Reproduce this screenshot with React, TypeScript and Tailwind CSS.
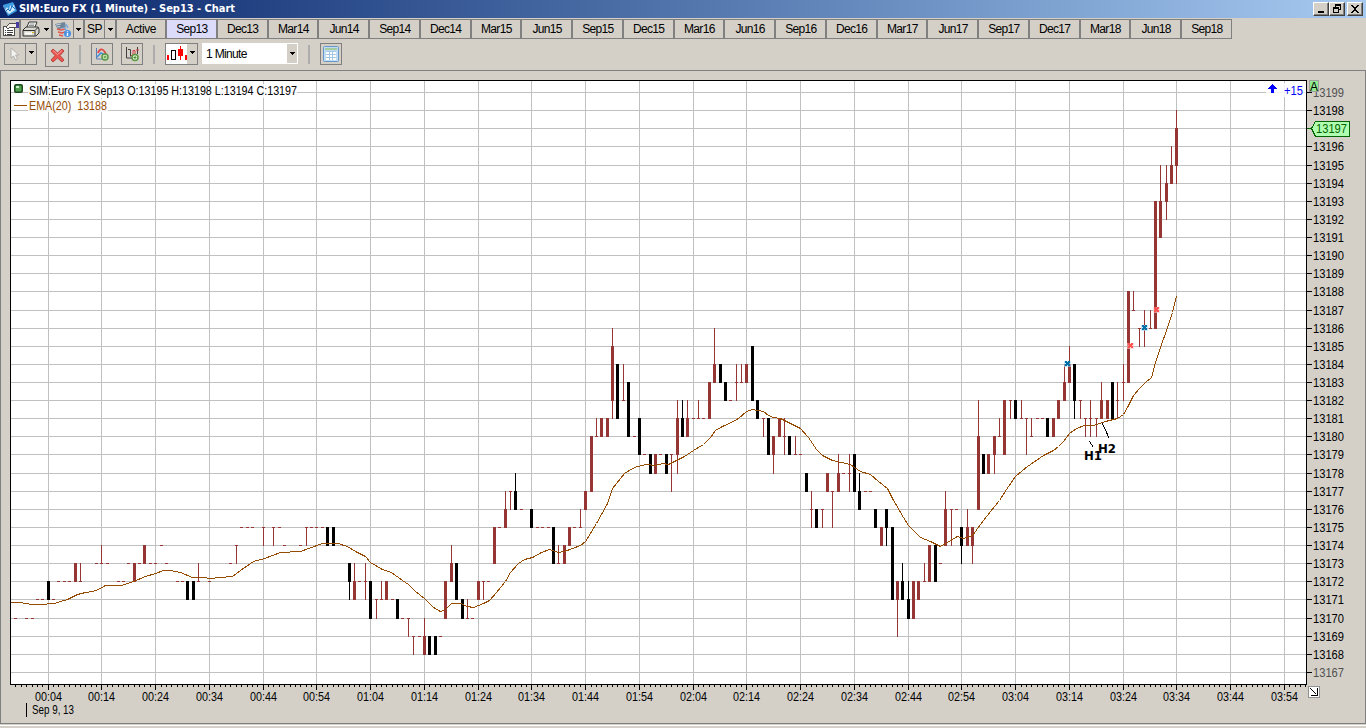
import type { ReactNode } from "react";

const contracts = [
  "Sep13", "Dec13", "Mar14", "Jun14", "Sep14", "Dec14", "Mar15", "Jun15", "Sep15", "Dec15", "Mar16",
  "Jun16", "Sep16", "Dec16", "Mar17", "Jun17", "Sep17", "Dec17", "Mar18", "Jun18", "Sep18",
];

// [minutes after 00:04, open, high, low, close], prices without the leading 131
const bars: number[][] = [
  [-6, 70, 70, 70, 70], [-4, 70, 70, 70, 70], [-3, 70, 70, 70, 70], [-2, 71, 71, 71, 71], [-1, 71, 71, 71, 71],
  [0, 72, 72, 71, 71], [1, 71, 71, 71, 71], [2, 72, 72, 72, 72], [3, 72, 72, 72, 72], [4, 72, 72, 72, 72],
  [5, 72, 73, 72, 73], [6, 72, 73, 72, 72], [9, 73, 73, 73, 73], [10, 73, 74, 73, 73], [11, 73, 73, 73, 73],
  [13, 72, 72, 72, 72], [14, 72, 72, 72, 72], [15, 73, 73, 73, 73], [16, 72, 73, 72, 73], [17, 73, 73, 73, 73],
  [18, 73, 74, 73, 74], [19, 73, 73, 73, 73], [20, 73, 73, 73, 73], [21, 74, 74, 74, 74], [22, 73, 73, 73, 73],
  [24, 72, 72, 72, 72], [25, 72, 72, 72, 72], [26, 72, 72, 71, 71], [27, 72, 72, 71, 71], [28, 72, 73, 72, 72],
  [30, 72, 72, 72, 72], [34, 73, 73, 73, 73], [35, 74, 74, 73, 74], [36, 75, 75, 75, 75], [37, 75, 75, 75, 75],
  [38, 75, 75, 75, 75], [40, 75, 75, 74, 75], [42, 75, 75, 74, 75], [43, 75, 75, 75, 75], [44, 74, 74, 74, 74],
  [47, 74, 74, 74, 74], [48, 75, 75, 74, 75], [49, 75, 75, 75, 75], [50, 75, 75, 75, 75], [51, 75, 75, 75, 75],
  [52, 75, 75, 74, 74], [53, 75, 75, 74, 74], [55, 74, 74, 74, 74], [56, 73, 73, 71, 72], [57, 71, 73, 71, 72],
  [58, 72, 72, 72, 72], [59, 72, 73, 71, 72], [60, 72, 72, 70, 70], [61, 71, 71, 70, 71], [62, 71, 72, 71, 71],
  [63, 71, 72, 71, 72], [64, 71, 71, 71, 71], [65, 71, 71, 70, 70], [66, 70, 70, 70, 70], [67, 70, 70, 69, 70],
  [68, 69, 69, 68, 69], [69, 69, 69, 69, 69], [70, 68, 70, 68, 69], [71, 69, 69, 68, 68], [72, 69, 69, 68, 68],
  [73, 69, 69, 69, 69], [74, 70, 72, 70, 72], [75, 72, 74, 72, 73], [76, 73, 73, 71, 71], [77, 71, 71, 70, 70],
  [78, 70, 71, 70, 70], [79, 70, 70, 70, 70], [80, 71, 72, 71, 72], [81, 72, 72, 71, 72], [82, 72, 72, 72, 72],
  [83, 73, 75, 73, 75], [84, 75, 75, 75, 75], [85, 75, 77, 75, 76], [86, 77, 77, 76, 77], [87, 77, 78, 76, 76],
  [88, 76, 76, 76, 76], [90, 76, 76, 75, 75], [91, 75, 75, 75, 75], [92, 75, 75, 75, 75], [93, 75, 75, 75, 75],
  [94, 75, 75, 73, 73], [95, 73, 74, 73, 73], [96, 73, 74, 73, 74], [97, 74, 75, 74, 75], [98, 75, 75, 75, 75],
  [99, 75, 76, 75, 75], [100, 76, 77, 76, 77], [101, 77, 80, 77, 80], [102, 80, 81, 80, 80], [103, 80, 81, 80, 81],
  [104, 80, 81, 80, 81], [105, 82, 86, 81, 85], [106, 84, 84, 81, 81], [107, 82, 84, 82, 82], [108, 83, 83, 80, 80],
  [109, 80, 80, 80, 80], [110, 81, 81, 79, 79], [111, 79, 79, 79, 79], [112, 79, 79, 78, 78], [113, 78, 79, 78, 79],
  [114, 79, 79, 79, 79], [115, 79, 79, 78, 78], [116, 79, 79, 77, 79], [117, 79, 82, 78, 81], [118, 81, 82, 80, 80],
  [119, 80, 82, 80, 81], [120, 81, 81, 81, 81], [121, 81, 82, 81, 81], [122, 81, 81, 81, 81], [123, 81, 83, 81, 83],
  [124, 83, 86, 83, 84], [125, 84, 84, 83, 83], [126, 83, 83, 82, 82], [127, 82, 82, 82, 82], [128, 83, 84, 82, 83],
  [129, 83, 84, 83, 83], [130, 83, 84, 83, 84], [131, 85, 85, 82, 82], [132, 82, 82, 81, 81], [133, 81, 81, 80, 81],
  [134, 81, 81, 79, 79], [135, 79, 80, 78, 80], [136, 80, 81, 80, 81], [137, 80, 81, 79, 80], [138, 80, 80, 79, 79],
  [139, 79, 80, 79, 79], [140, 79, 79, 79, 79], [141, 78, 78, 77, 77], [142, 76, 77, 75, 76], [143, 76, 76, 75, 75],
  [144, 76, 76, 75, 76], [145, 77, 78, 77, 78], [146, 77, 77, 75, 77], [147, 77, 79, 77, 78], [148, 78, 78, 78, 78],
  [149, 78, 79, 77, 78], [150, 79, 79, 77, 77], [151, 77, 78, 76, 76], [152, 77, 77, 77, 77], [153, 77, 77, 77, 77],
  [154, 76, 76, 75, 75], [155, 74, 75, 74, 75], [156, 76, 76, 74, 75], [157, 75, 75, 71, 71], [158, 71, 72, 69, 72],
  [159, 72, 73, 71, 71], [160, 71, 72, 70, 70], [161, 70, 72, 70, 72], [162, 71, 72, 71, 72], [163, 72, 73, 72, 72],
  [164, 72, 74, 72, 74], [165, 74, 74, 72, 72], [166, 73, 73, 73, 73], [167, 74, 77, 74, 76], [168, 76, 76, 74, 76],
  [169, 76, 76, 76, 76], [170, 75, 75, 73, 74], [171, 74, 76, 74, 75], [172, 74, 75, 73, 75], [173, 76, 82, 76, 80],
  [174, 79, 79, 78, 78], [175, 78, 79, 78, 79], [176, 79, 80, 78, 80], [177, 80, 81, 80, 80], [178, 79, 82, 79, 82],
  [179, 82, 82, 81, 82], [180, 82, 82, 81, 81], [181, 81, 82, 81, 81], [182, 81, 81, 79, 81], [183, 80, 81, 80, 80],
  [184, 81, 81, 81, 81], [185, 81, 81, 81, 81], [186, 81, 81, 80, 80], [187, 80, 81, 80, 81], [188, 81, 82, 81, 82],
  [189, 82, 84, 82, 83], [190, 83, 85, 83, 84], [191, 84, 84, 81, 82], [192, 82, 82, 81, 82], [193, 81, 81, 80, 81],
  [194, 81, 82, 80, 81], [195, 81, 81, 80, 81], [196, 81, 83, 81, 82], [197, 81, 82, 81, 82], [198, 83, 83, 81, 81],
  [199, 82, 83, 81, 82], [200, 83, 84, 82, 83], [201, 83, 88, 83, 88], [202, 87, 88, 87, 87], [203, 86, 86, 85, 86],
  [204, 86, 87, 85, 86], [205, 86, 87, 86, 86], [206, 86, 93, 86, 93], [207, 91, 95, 91, 93], [208, 93, 95, 92, 94],
  [209, 94, 96, 94, 95], [210, 95, 98, 94, 97],
];

const ema =
  "10,602 20,602 31,604 45,604 48,603 54,603 60,601 67,599 77,594 85,592 92,591 98,589 105,585 121,585 133,581 145,576 155,573 163,570 170,570 180,572 192,577 203,577 210,578 220,577 232,576 240,570 253,561 264,558 280,552 " +
  "300,551 311,547 322,543 338,543 347,546 355,551 365,556 370,562 382,569 391,572 402,580 408,584 415,591 424,598 433,607 440,611 445,609 451,603 460,603 467,606 473,607 483,603 489,600 496,592 505,581 510,572 518,563 " +
  "524,559 532,557 541,552 549,549 558,552 564,551 572,548 580,545 585,541 596,523 607,503 612,488 624,473 634,467 645,464 655,465 662,463 668,464 674,461 684,456 693,450 703,444 710,437 715,430 722,426 731,422 738,418 " +
  "746,411 752,409 763,411 768,415 773,417 780,418 790,423 800,428 808,437 816,449 822,455 832,460 841,462 850,464 854,467 860,471 870,474 878,481 887,488 892,498 903,517 908,525 920,537 930,541 940,546 945,543 957,536 " +
  "963,538 972,535 980,524 990,511 999,500 1006,489 1015,476 1027,466 1043,455 1053,450 1058,446 1063,441 1069,433 1076,428 1084,425 1093,425 1105,421 1117,418 1123,414 1128,405 1133,395 1139,388 1145,382 1151,377 " +
  "1155,362 1160,347 1166,330 1172,312 1176,296";

const marks = [
  { x: 1067, y: 364, color: "#0070a8", halo: "#a8d8f0" },
  { x: 1130, y: 346, color: "#ff5050", halo: "#ffc8c8" },
  { x: 1144, y: 328, color: "#0070a8", halo: "#a8d8f0" },
  { x: 1156, y: 310, color: "#ff5050", halo: "#ffc8c8" },
];

// the chart svg starts below the toolbars
const TOP = 71;
const xAt = (m: number) => Math.floor(48.2 + 5.375 * m);
const yAt = (p: number) => Math.round(92.08 + 18.12 * (99 - p));

const prices = Array.from({ length: 33 }, (_, i) => 99 - i);
const hours = Array.from({ length: 24 }, (_, i) => i * 10);
const minutes = Array.from({ length: 241 }, (_, i) => i - 6);

function timeLabel(m: number) {
  const t = m + 4;
  return `${String(Math.floor(t / 60)).padStart(2, "0")}:${String(t % 60).padStart(2, "0")}`;
}

function Arrow() {
  return (
    <svg width="5" height="3" viewBox="0 0 5 3" shapeRendering="crispEdges" className="shrink-0">
      <path d="M0 0h5v1H0zM1 1h3v1H1zM2 2h1v1H2z" />
    </svg>
  );
}

function Cell({ className = "", children }: { className?: string; children: ReactNode }) {
  return (
    <div className={`flex h-5 shrink-0 items-center justify-center border border-[#808080] ${className}`}>{children}</div>
  );
}

function Separator() {
  return <div className="mt-0.5 ml-[10px] h-[19px] w-0.5 shrink-0 bg-[#acacac]" />;
}

function TitleBar() {
  return (
    <div className="flex h-[18px] items-center bg-linear-to-r from-[#0a246a] to-[#a6caf0]">
      <svg width="16" height="16" viewBox="0 0 16 16" className="ml-0.5 shrink-0">
        <path d="M1 4l10-3 4 9-9 5z" fill="#3d9be0" />
        <path d="M1 4l5 11-1-2-4-8z" fill="#b9dcf4" />
        <path d="M3 9l2-3 2 3 1-5 2 3 2-4 1 6-6 4z" fill="#e8f6ff" opacity=".85" />
        <path d="M4 10l2-2 2 2 2-5 3 3" fill="none" stroke="#1672c4" />
      </svg>
      <div className="ml-px w-[1294px] font-['DejaVu_Sans_Condensed','DejaVu_Sans',sans-serif] text-[11px] leading-[18px] font-bold tracking-[-0.02px] whitespace-nowrap text-white">
        SIM:Euro FX (1 Minute) - Sep13 - Chart
      </div>
      <div className="flex">
        <WindowButton>
          <path d="M3 8h6v2H3z" />
        </WindowButton>
        <WindowButton>
          <path d="M4 1h6v6H8V6h1V3H5v1H4zM2 4h6v6H2zM3 6v3h4V6z" fillRule="evenodd" />
        </WindowButton>
        <div className="w-0.5" />
        <WindowButton>
          <path d="M2 2h2v1h1v1h2V3h1V2h2v1H9v1H8v1H7v2h1v1h1v1h1v1H8V9H7V8H5v1H4v1H2V9h1V8h1V7h1V5H4V4H3V3H2z" />
        </WindowButton>
      </div>
    </div>
  );
}

function WindowButton({ children }: { children: ReactNode }) {
  return (
    <div className="h-[14px] w-4 border border-t-white border-r-[#404040] border-b-[#404040] border-l-white bg-[#d4d0c8] shadow-[inset_-1px_-1px_#808080]">
      <svg width="12" height="12" viewBox="0 0 12 12" shapeRendering="crispEdges" className="ml-px">
        {children}
      </svg>
    </div>
  );
}

function ContractBar() {
  return (
    <div className="mt-px flex h-5 text-[12px] leading-none tracking-[-0.65px]">
      <Cell className="w-5">
        <svg width="17" height="16" viewBox="0 0 17 16" shapeRendering="crispEdges" className="shrink-0">
          <path d="M1.5 5.5h11v9h-11z" fill="#fff" stroke="#505050" />
          <path d="M3 9h1v1H3zM3 11h1v1H3zM5 9h6v1H5zM5 11h6v1H5zM5 13h5v1H5zM3 13h1v1H3z" fill="#404040" />
          <path d="M4 6l3-3 3-1 4 1v3l-4 1-2-1-2 2z" fill="#f4f0e8" stroke="#505050" />
          <path d="M14 1h3v6h-3z" fill="#4a3ca0" />
        </svg>
      </Cell>
      <Cell className="w-8 gap-1 pr-0.5">
        <svg width="18" height="16" viewBox="0 0 18 16">
          <path d="M5 6l2-5h8l-2 5" fill="#fff" stroke="#303030" />
          <path d="M7.5 3h5M7 4.5h5" stroke="#606060" strokeWidth=".7" />
          <path d="M1 9l3-3h12l1 2v4l-3 3H1z" fill="#d8d8d0" stroke="#303030" />
          <path d="M1 9.5h12v5M13 9.5l3-3" fill="none" stroke="#303030" />
          <path d="M3 11.5h7v2H3z" fill="#fff" />
          <path d="M10 11h2v1h-2z" fill="#e0c020" />
        </svg>
        <Arrow />
      </Cell>
      <Cell className="w-[21px] border-r-0">
        <svg width="18" height="17" viewBox="0 0 18 17">
          <path d="M1 3l10-2 1 7-8 1z" fill="#6f8698" />
          <path d="M2 4l5-1M3 6l3-.5" stroke="#c7d2dc" />
          <path d="M5 8l8-2 2 9-7 1z" fill="#c8ccd8" />
          <path d="M3 8l4 1 4-1M4 11l4 1 3-1M5 14l4 1" fill="none" stroke="#e05848" strokeWidth="1.4" />
          <path d="M10 6l2 3M12 3l2 4" stroke="#78a8d8" strokeWidth="1.5" />
          <circle cx="13.5" cy="12.5" r="3.5" fill="#4890e0" />
          <path d="M13.5 10.3v1M13.5 12v3" stroke="#fff" strokeWidth="1.4" />
        </svg>
      </Cell>
      <Cell className="w-[11px]">
        <Arrow />
      </Cell>
      <Cell className="w-[21px] tracking-[-0.4px]">SP</Cell>
      <Cell className="w-[11px] border-l-0">
        <Arrow />
      </Cell>
      <Cell className="w-[50px] tracking-[-0.4px]">Active</Cell>
      {contracts.map((name, i) => (
        <Cell key={name} className={`w-[50.75px] pl-px ${i === 0 ? "bg-[#dcdcfa]" : ""}`}>
          {name}
        </Cell>
      ))}
    </div>
  );
}

function ToolBar() {
  return (
    <div className="flex h-[31px] pt-1 pl-1">
      <div className="flex h-[22px] w-[33px] border border-[#808080]">
        <div className="flex w-[21px] items-center justify-center border-r border-[#808080]">
          <svg width="12" height="14" viewBox="0 0 12 14">
            <path d="M2 1v10l2.5-2 2 4 2-1-2-4H10z" fill="#f2f2f0" stroke="#b4b2ae" />
          </svg>
        </div>
        <div className="flex flex-1 items-center justify-center pb-1">
          <Arrow />
        </div>
      </div>
      <div className="ml-2 flex h-6 w-6 items-center justify-center border border-[#808080]">
        <svg width="15" height="15" viewBox="0 0 15 15">
          <path d="M1 3l2-2 4.500 4L12 1l2 2-4 4.500 4 4.500-2 2-4.500-4L3 14l-2-2 4-4.500z" fill="#ec5450" stroke="#b84440" />
          <path d="M3 2.5l4.5 4 4.500-4" fill="none" stroke="#ff9c9c" />
        </svg>
      </div>
      <Separator />
      <div className="ml-[10px] flex h-[22px] w-[22px] items-center justify-center border border-[#808080]">
        <svg width="16" height="16" viewBox="0 0 16 16">
          <path d="M2.500 2v11h9" fill="none" stroke="#5880b8" />
          <path d="M4 7c2-5 5-5 8 1" fill="none" stroke="#e04848" strokeWidth="1.800" />
          <path d="M3 11l4-4 4 2" fill="none" stroke="#4090d8" strokeWidth="1.500" />
          <circle cx="11" cy="11" r="3" fill="#e8f4e0" stroke="#589840" strokeWidth="1.500" />
          <path d="M9.500 11h3M11 9.500v3" stroke="#489030" />
        </svg>
      </div>
      <div className="ml-2 flex h-[22px] w-[22px] items-center justify-center border border-[#808080]">
        <svg width="16" height="16" viewBox="0 0 16 16">
          <path d="M2.500 1v11h7" fill="none" stroke="#404040" />
          <path d="M4 3.500h2.500v7M13.500 1v7" fill="none" stroke="#404040" />
          <path d="M7 9.500h2v-5h2V8M12 4h3" fill="none" stroke="#d84040" />
          <circle cx="11" cy="11.500" r="3" fill="#e8f4e0" stroke="#589840" strokeWidth="1.500" />
          <path d="M9.500 11.500h3M11 10v3" stroke="#489030" />
        </svg>
      </div>
      <Separator />
      <div className="ml-[10px] flex h-[22px] w-[33px] border border-[#808080]">
        <svg width="21" height="20" viewBox="0 0 21 20" shapeRendering="crispEdges">
          <path d="M0 0h21v20H0z" fill="#fff" />
          <path d="M1 11h2v5H1zM19 11h2v5h-2zM12 5h5v7h-5zM14 2h1v14h-1z" fill="#f00" />
          <path d="M5.500 6.500h4v9h-4z" fill="#fff" stroke="#000" />
        </svg>
        <div className="flex flex-1 items-center justify-center pb-1">
          <Arrow />
        </div>
      </div>
      <div className="ml-1 flex h-[21px] w-24 items-center bg-white pl-1 text-[12px] tracking-[-0.65px]">
        <span className="flex-1">1 Minute</span>
        <div className="mr-px flex h-[19px] w-[10px] items-center justify-center bg-[#d4d0c8]">
          <Arrow />
        </div>
      </div>
      <Separator />
      <div className="ml-[10px] flex h-[22px] w-[22px] items-center justify-center border border-[#808080]">
        <svg width="16" height="16" viewBox="0 0 16 16">
          <rect x=".5" y=".5" width="15" height="15" rx="1" fill="#c0dcf4" stroke="#6898c8" />
          <path d="M2 2h12v2H2z" fill="#a4cc9c" />
          <path d="M3 5h10v9H3z" fill="#fff" />
          <path d="M3 5.500h10M3 8.500h10M3 11.500h10M6.500 6v8M9.500 6v8" stroke="#a4c8e4" />
        </svg>
      </div>
    </div>
  );
}

function Chart() {
  return (
    <svg
      width="1366"
      height="653"
      viewBox={`0 ${TOP} 1366 653`}
      className="block font-['Liberation_Sans',Arial,sans-serif] text-[12px]"
      shapeRendering="crispEdges"
    >
      <rect x="10" y="80" width="1297" height="605" fill="#000" />
      <rect x="11" y="81" width="1295" height="603" fill="#fff" />

      {prices.map((p) => (
        <g key={p}>
          <rect x="11" y={yAt(p)} width="1295" height="1" fill="#c0c0c0" />
          <rect x="1307" y={yAt(p)} width="5" height="1" fill={p === 97 ? "#006400" : "#000"} />
          {p !== 97 && (
            <text x="1313" y={yAt(p) + 5} textLength="31" lengthAdjust="spacingAndGlyphs" fill={p === 99 || p === 67 ? "#505050" : "#000"}>
              {13100 + p}
            </text>
          )}
        </g>
      ))}
      {hours.map((m) => (
        <g key={m}>
          <rect x={xAt(m)} y="81" width="1" height="603" fill="#c0c0c0" />
          <rect x={xAt(m)} y="685" width="1" height="5" />
          <text x={xAt(m) - 13} y="701" textLength="27" lengthAdjust="spacingAndGlyphs">
            {timeLabel(m)}
          </text>
        </g>
      ))}
      {minutes.map((m) => xAt(m) < 1306 && <rect key={m} x={xAt(m)} y="685" width="1" height="2" />)}

      {bars.map(([m, open, high, low, close]) => {
        const x = xAt(m);
        const top = yAt(Math.max(open, close));
        const bottom = yAt(Math.min(open, close));
        return (
          <g key={m} fill={close < open ? "#000" : "#963634"}>
            <rect x={x} y={yAt(high)} width="1" height={yAt(low) - yAt(high) + 1} />
            <rect x={x - 1} y={top} width="3" height={bottom - top + 1} />
          </g>
        );
      })}
      <polyline points={ema} transform="translate(.5 .5)" fill="none" stroke="#964b00" />

      {marks.map((k) => (
        <g key={k.x}>
          <rect x={k.x - 3} y={k.y - 3} width="7" height="6" fill={k.halo} opacity=".6" />
          <path
            d={`M${k.x - 2} ${k.y - 3}h2v1h1v-1h2v2h-1v1h1v2h-2v-1h-1v1h-2v-2h1v-1h-1z`}
            fill={k.color}
          />
        </g>
      ))}

      <g stroke="#000" fill="none">
        <path d="M1089.500 441.500l4 6M1102.500 423.500l6.500 14.500" />
      </g>
      <g className="font-['DejaVu_Sans',sans-serif] text-[12px] font-bold">
        <text x="1084" y="460" textLength="18" lengthAdjust="spacingAndGlyphs">H1</text>
        <text x="1098" y="453" textLength="18" lengthAdjust="spacingAndGlyphs">H2</text>
      </g>

      {/* legend */}
      <rect x="28" y="84" width="269" height="14" fill="#fff" opacity=".8" />
      <rect x="28" y="99" width="80" height="13" fill="#fff" opacity=".8" />
      <rect x="14" y="84" width="9" height="9" rx="2" fill="#1c4a1c" shapeRendering="auto" />
      <rect x="15.500" y="85.500" width="6" height="6" rx="1" fill="#50a050" shapeRendering="auto" />
      <rect x="16" y="86" width="3" height="2" fill="#c8f0c8" />
      <text x="29" y="95" textLength="268" lengthAdjust="spacingAndGlyphs">
        SIM:Euro FX Sep13 O:13195 H:13198 L:13194 C:13197
      </text>
      <rect x="14" y="105" width="13" height="1" fill="#964b00" />
      <text x="29" y="110" textLength="78" lengthAdjust="spacingAndGlyphs" fill="#964b00" className="whitespace-pre">
        {"EMA(20)  13188"}
      </text>

      {/* net change */}
      <rect x="1266" y="83" width="40" height="14" fill="#fff" opacity=".8" />
      <path d="M1272 84h1v1h1v1h1v1h1v1h1v1h-3v4h-3v-4h-3v-1h1v-1h1v-1h1v-1h1z" fill="#00f" />
      <text x="1284" y="95" textLength="19" lengthAdjust="spacingAndGlyphs" fill="#00f">+15</text>

      <rect x="1309.500" y="80.500" width="9" height="11" fill="#90ee90" stroke="#a0a0a0" />
      <text x="1310" y="91" textLength="8" lengthAdjust="spacingAndGlyphs">A</text>

      {/* last price tag */}
      <path d="M1311.500 128.500l4-7h34v15h-34z" fill="#b0ffb0" stroke="#006400" />
      <text x="1316" y="133" textLength="31" lengthAdjust="spacingAndGlyphs" fill="#006400">13197</text>

      <rect x="1308.500" y="686.500" width="11" height="11" fill="#fff" stroke="#909090" />
      <path d="M1310.500 688.500l6 6M1317.500 688v7.500h-7" fill="none" stroke="#000" />

      <rect x="26" y="703" width="1" height="14" />
      <text x="32" y="714" textLength="42" lengthAdjust="spacingAndGlyphs">Sep 9, 13</text>
    </svg>
  );
}

export default function App() {
  return (
    <div className="h-[728px] w-[1366px] overflow-hidden bg-[#d4d0c8] font-['Liberation_Sans',Arial,sans-serif] text-black">
      <TitleBar />
      <ContractBar />
      <ToolBar />
      <div className="h-[654px] border border-[#808080]">
        <div className="-ml-px">
          <Chart />
        </div>
      </div>
      <div className="mt-px h-px bg-white" />
    </div>
  );
}
